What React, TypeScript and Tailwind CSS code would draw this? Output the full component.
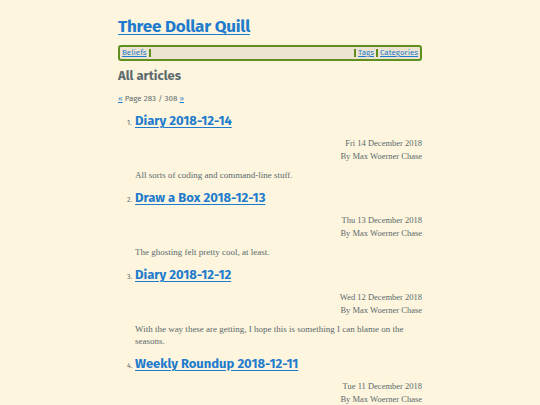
const articles = [
  {
    title: "Diary 2018-12-14",
    date: "Fri 14 December 2018",
    summary: "All sorts of coding and command-line stuff.",
  },
  {
    title: "Draw a Box 2018-12-13",
    date: "Thu 13 December 2018",
    summary: "The ghosting felt pretty cool, at least.",
  },
  {
    title: "Diary 2018-12-12",
    date: "Wed 12 December 2018",
    summary:
      "With the way these are getting, I hope this is something I can blame on the seasons.",
  },
  {
    title: "Weekly Roundup 2018-12-11",
    date: "Tue 11 December 2018",
    summary: "A bit of everything this week.",
  },
];

const sans = "font-['Fira_Sans','Open_Sans','Noto_Sans',sans-serif]";
const serif = "font-['Liberation_Serif',serif]";

export default function App() {
  return (
    <div className="min-h-[405px] bg-[#fdf5dd] text-[#5c6a6e]">
      <div className="mx-auto w-[304px] pt-[15px]">
        <h1 className={`${sans} text-[17px] font-bold leading-[24px] tracking-[-0.2px]`}>
          <a href="#" className="text-[#1e7bcd] underline underline-offset-2">
            Three Dollar Quill
          </a>
        </h1>

        <nav className={`${sans} mt-[6px] flex h-[16px] items-center rounded-[3px] border-2 border-[#5e8f1f] bg-[#ece4d0] text-[8px] leading-none`}>
          <a href="#" className="border-r-2 border-[#5e8f1f] px-[2px] text-[#1e7bcd] underline">
            Beliefs
          </a>
          <div className="flex-1" />
          <a href="#" className="border-l-2 border-[#5e8f1f] px-[2px] text-[#1e7bcd] underline">
            Tags
          </a>
          <a href="#" className="border-l-2 border-[#5e8f1f] px-[2px] text-[#1e7bcd] underline">
            Categories
          </a>
        </nav>

        <h2 className={`${sans} mt-[6px] text-[13px] font-bold leading-[18px]`}>All articles</h2>

        <p className={`${sans} mt-[8px] text-[8px] leading-[12px]`}>
          <a href="#" className="text-[#1e7bcd] underline">«</a> Page 283 / 308{" "}
          <a href="#" className="text-[#1e7bcd] underline">»</a>
        </p>

        <ol className="mt-[5px] pl-[17px]">
          {articles.map((a, i) => (
            <li key={a.title} className="flex flex-col">
              <div className="flex items-baseline">
                <span className={`${sans} -ml-[8px] mr-[1px] w-[7px] text-[7px]`}>{i + 1}.</span>
                <a
                  href="#"
                  className={`${sans} text-[13px] font-bold leading-[22px] text-[#1e7bcd] underline underline-offset-2`}
                >
                  {a.title}
                </a>
              </div>
              <div className={`${serif} mt-[5px] text-right text-[8.5px] leading-[12.5px]`}>
                <div>{a.date}</div>
                <div>By Max Woerner Chase</div>
              </div>
              <p className={`${serif} mt-[7px] mb-[6px] text-[9px] leading-[12px]`}>{a.summary}</p>
            </li>
          ))}
        </ol>
      </div>
    </div>
  );
}
